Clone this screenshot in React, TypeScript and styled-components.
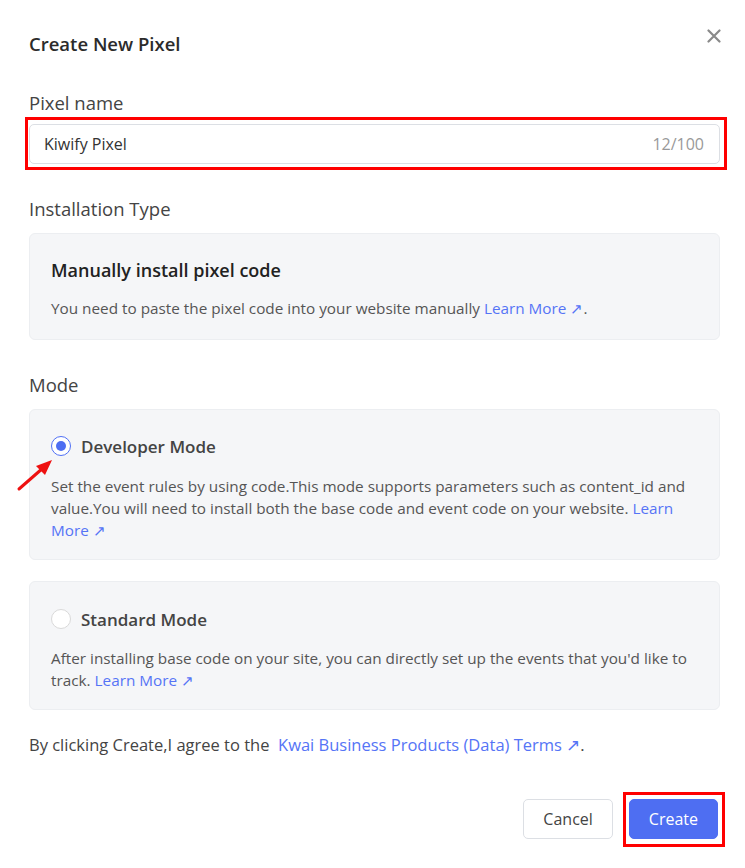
import React, {useState} from 'react';
import styled, {createGlobalStyle} from 'styled-components';

const GlobalStyle = createGlobalStyle`
  body {
    margin: 0;
    background: #fff;
    font-family: "Open Sans", "Liberation Sans", sans-serif;
    color: #333;
  }
`;

const Dialog = styled.div`
  width: 745px;
  height: 868px;
  box-sizing: border-box;
  padding: 32px 25px 0 29px;
  display: flex;
  flex-direction: column;
`;

const Header = styled.div`
  display: flex;
  justify-content: space-between;
  align-items: flex-start;
`;

const Title = styled.div`
  font-size: 18.5px;
  line-height: 24px;
  font-weight: 600;
  color: #2b2b2b;
`;

const CloseButton = styled.button`
  border: none;
  background: none;
  padding: 0;
  margin: -9px -7px 0 0;
  width: 26px;
  height: 26px;
  display: flex;
  align-items: center;
  justify-content: center;
  cursor: pointer;
`;

const Label = styled.div<{gap: number}>`
  margin-top: ${({gap}) => gap}px;
  font-size: 18.5px;
  line-height: 24px;
  color: #444;
`;

const Marked = styled.div`
  position: relative;
`;

const RedBox = styled.div<{t: number; r: number; b: number; l: number}>`
  position: absolute;
  top: ${({t}) => t}px;
  right: ${({r}) => r}px;
  bottom: ${({b}) => b}px;
  left: ${({l}) => l}px;
  border: 3px solid #ff0000;
  pointer-events: none;
`;

const InputWrap = styled.div`
  margin-top: 9px;
  height: 40px;
  box-sizing: border-box;
  border: 1px solid #dcdfe4;
  border-radius: 5px;
  display: flex;
  align-items: center;
  padding: 0 15px 0 14px;
  background: #fff;
`;

const TextInput = styled.input`
  flex: 1;
  border: none;
  outline: none;
  font-family: inherit;
  font-size: 16px;
  color: #333;
  padding: 0;
  background: transparent;
`;

const Counter = styled.span`
  font-size: 16px;
  color: #999;
`;

const Card = styled.div<{gap: number; pt: number; pb: number}>`
  position: relative;
  margin-top: ${({gap}) => gap}px;
  padding: ${({pt}) => pt}px 20px ${({pb}) => pb}px 21px;
  background: #f5f6f8;
  border: 1px solid #eceef1;
  border-radius: 6px;
`;

const CardTitle = styled.div`
  font-size: 18px;
  line-height: 24px;
  font-weight: 600;
  color: #222;
`;

const CardText = styled.div<{gap: number}>`
  margin-top: ${({gap}) => gap}px;
  font-size: 15.3px;
  line-height: 22px;
  color: #555;
`;

const Link = styled.a`
  color: #5574f6;
  text-decoration: none;
  cursor: pointer;
`;

const RadioRow = styled.label`
  display: flex;
  align-items: center;
  gap: 10px;
  height: 24px;
  cursor: pointer;
`;

const RadioDot = styled.span<{checked: boolean}>`
  width: 20px;
  height: 20px;
  box-sizing: border-box;
  border-radius: 50%;
  border: 1px solid ${({checked}) => (checked ? '#5070f5' : '#d9d9d9')};
  background: #fff;
  display: flex;
  align-items: center;
  justify-content: center;
  &::after {
    content: '';
    width: 10px;
    height: 10px;
    border-radius: 50%;
    background: ${({checked}) => (checked ? '#4e6ef2' : 'transparent')};
  }
`;

const RadioLabel = styled.span`
  font-size: 17px;
  font-weight: 600;
  color: #444;
`;

const Arrow = styled.svg`
  position: absolute;
  left: -14px;
  top: 45px;
`;

const Terms = styled.div`
  margin-top: 24px;
  font-size: 16.5px;
  line-height: 22px;
  color: #444;
`;

const Footer = styled.div`
  margin-top: 43px;
  padding-right: 2px;
  display: flex;
  justify-content: flex-end;
  gap: 16px;
`;

const Button = styled.button<{primary?: boolean}>`
  height: 40px;
  box-sizing: border-box;
  padding: 0 19px;
  border-radius: 5px;
  font-family: inherit;
  font-size: 16px;
  cursor: pointer;
  border: 1px solid ${({primary}) => (primary ? '#4e6ef2' : '#dcdfe4')};
  background: ${({primary}) => (primary ? '#4e6ef2' : '#fff')};
  color: ${({primary}) => (primary ? '#fff' : '#444')};
`;

const ExtIcon = () => <span> ↗</span>;

export default function App() {
  const [name, setName] = useState('Kiwify Pixel');
  const [mode, setMode] = useState<'dev' | 'std'>('dev');

  return (
    <>
      <GlobalStyle />
      <Dialog>
        <Header>
          <Title>Create New Pixel</Title>
          <CloseButton aria-label="close">
            <svg width="14" height="14" viewBox="0 0 14 14">
              <path d="M1.5 1.5 L12.5 12.5 M12.5 1.5 L1.5 12.5" stroke="#8a8a8a" strokeWidth="2.2" strokeLinecap="round" />
            </svg>
          </CloseButton>
        </Header>

        <Label gap={35}>Pixel name</Label>
        <Marked>
          <InputWrap>
            <TextInput value={name} maxLength={100} onChange={(e) => setName(e.target.value)} />
            <Counter>{name.length}/100</Counter>
          </InputWrap>
          <RedBox t={2} r={-7} b={-6} l={-4} />
        </Marked>

        <Label gap={33}>Installation Type</Label>
        <Card gap={12} pt={24} pb={20}>
          <CardTitle>Manually install pixel code</CardTitle>
          <CardText gap={15}>
            You need to paste the pixel code into your website manually <Link>Learn More<ExtIcon /></Link>.
          </CardText>
        </Card>

        <Label gap={33}>Mode</Label>
        <Card gap={12} pt={24} pb={18}>
          <RadioRow onClick={() => setMode('dev')}>
            <RadioDot checked={mode === 'dev'} />
            <RadioLabel>Developer Mode</RadioLabel>
          </RadioRow>
          <CardText gap={17}>
            Set the event rules by using code.This mode supports parameters such as content_id and
            value.You will need to install both the base code and event code on your website. <Link>Learn More<ExtIcon /></Link>
          </CardText>
          <Arrow width="42" height="38" viewBox="0 0 42 38">
            <path d="M3 34 L27 13" stroke="#ee1111" strokeWidth="3" strokeLinecap="round" />
            <path d="M36 5 L20 11 L29 20 Z" fill="#ee1111" />
          </Arrow>
        </Card>

        <Card gap={21} pt={25} pb={18}>
          <RadioRow onClick={() => setMode('std')}>
            <RadioDot checked={mode === 'std'} />
            <RadioLabel>Standard Mode</RadioLabel>
          </RadioRow>
          <CardText gap={16}>
            After installing base code on your site, you can directly set up the events that you'd like to
            track. <Link>Learn More<ExtIcon /></Link>
          </CardText>
        </Card>

        <Terms>
          By clicking Create,I agree to the&nbsp; <Link>Kwai Business Products (Data) Terms<ExtIcon /></Link>.
        </Terms>

        <Footer>
          <Button>Cancel</Button>
          <Marked>
            <Button primary>Create</Button>
            <RedBox t={-7} r={-7} b={-8} l={-6} />
          </Marked>
        </Footer>
      </Dialog>
    </>
  );
}
